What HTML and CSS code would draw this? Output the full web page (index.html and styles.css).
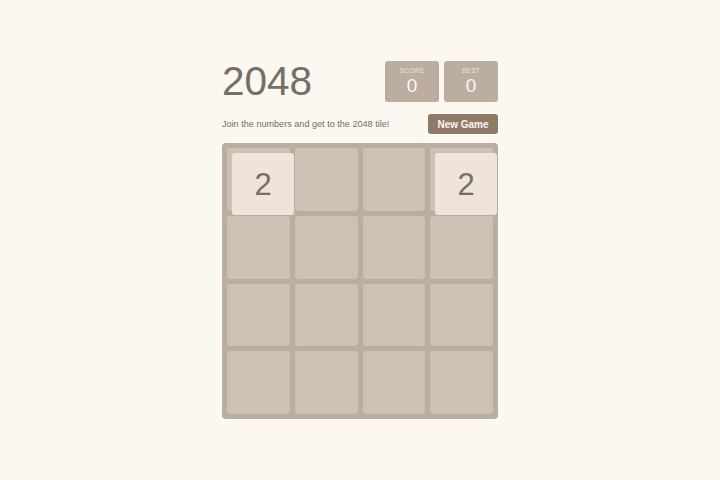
FILE: index.html
```html
<!DOCTYPE html>
<html>
<head>
<meta charset="utf-8">
<link rel="stylesheet" href="styles.css">
</head>
<body>
<div class="container">
  <div class="heading">
    <h1 class="title">2048</h1>
    <div class="scores">
      <div class="score-box"><span class="label">Score</span><span class="value">0</span></div>
      <div class="score-box"><span class="label">Best</span><span class="value">0</span></div>
    </div>
  </div>
  <div class="intro">
    <p class="subtitle">Join the numbers and get to the 2048 tile!</p>
    <button class="new-game">New Game</button>
  </div>
  <div class="board">
    <div class="grid">
      <div class="cell"></div><div class="cell"></div><div class="cell"></div><div class="cell"></div>
      <div class="cell"></div><div class="cell"></div><div class="cell"></div><div class="cell"></div>
      <div class="cell"></div><div class="cell"></div><div class="cell"></div><div class="cell"></div>
      <div class="cell"></div><div class="cell"></div><div class="cell"></div><div class="cell"></div>
    </div>
    <div class="tile tile-a">2</div>
    <div class="tile tile-b">2</div>
  </div>
</div>
</body>
</html>
```

FILE: styles.css
```css
html, body {
  margin: 0;
  padding: 0;
  background: #faf8f0;
  font-family: "Liberation Sans", Arial, sans-serif;
  color: #776e65;
}
.container {
  width: 276px;
  margin: 0 auto;
  padding-top: 61px;
}
.heading {
  display: flex;
  justify-content: space-between;
  align-items: center;
  height: 40px;
}
.title {
  margin: 0;
  font-size: 40.5px;
  font-weight: normal;
  line-height: 40px;
  color: #776e65;
}
.scores {
  display: flex;
  gap: 5px;
}
.score-box {
  width: 54px;
  height: 41px;
  background: #bbada0;
  border-radius: 3px;
  display: flex;
  flex-direction: column;
  align-items: center;
  box-sizing: border-box;
  padding-top: 6px;
}
.label {
  font-size: 6.5px;
  text-transform: uppercase;
  color: #eee4da;
  letter-spacing: 0.3px;
  line-height: 8px;
}
.value {
  font-size: 19px;
  line-height: 21px;
  color: #fbf8f2;
}
.intro {
  display: flex;
  justify-content: space-between;
  align-items: center;
  margin-top: 13px;
  height: 20px;
}
.subtitle {
  margin: 0;
  font-size: 9.1px;
  color: #776e65;
}
.new-game {
  width: 70px;
  height: 20px;
  border: none;
  border-radius: 3px;
  background: #8f7a66;
  color: #f9f6f2;
  font-family: "Liberation Sans", Arial, sans-serif;
  font-weight: bold;
  font-size: 10px;
  padding: 0;
}
.board {
  position: relative;
  margin-top: 9px;
  width: 276px;
  height: 276px;
  background: #bbada0;
  border-radius: 4px;
  box-sizing: border-box;
  padding: 5px;
}
.grid {
  display: grid;
  grid-template-columns: repeat(4, 1fr);
  grid-template-rows: repeat(4, 1fr);
  gap: 5px;
  width: 100%;
  height: 100%;
}
.cell {
  background: #cdc1b4;
  border-radius: 3px;
}
.tile {
  position: absolute;
  width: 62px;
  height: 62px;
  background: #eee4da;
  border-radius: 3px;
  display: flex;
  align-items: center;
  justify-content: center;
  font-size: 31px;
  line-height: 1;
  padding-top: 1px;
  box-sizing: border-box;
  color: #776e65;
}
.tile-a { left: 10px; top: 10px; }
.tile-b { left: 213px; top: 10px; }
```
